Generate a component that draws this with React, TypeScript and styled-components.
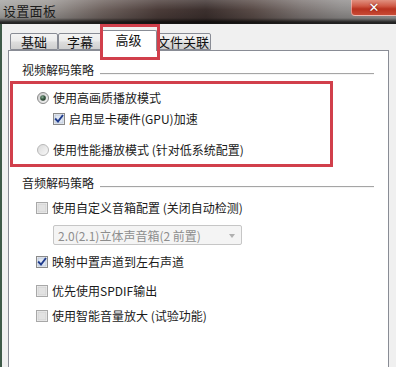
import React from "react";
import styled, { createGlobalStyle } from "styled-components";

const Global = createGlobalStyle`
  html, body { margin: 0; padding: 0; background: #f0f0f0; }
  body { font-family: "Noto Sans CJK SC", "Microsoft YaHei", "DejaVu Sans", sans-serif; }
  * { box-sizing: border-box; }
`;

const Window = styled.div`
  width: 396px;
  height: 367px;
  overflow: hidden;
  display: flex;
  flex-direction: column;
  background: #f0f0f0;
`;

const TitleBar = styled.div`
  height: 24px;
  flex: none;
  display: flex;
  justify-content: space-between;
  align-items: flex-start;
  background:
    linear-gradient(180deg, rgba(255,255,255,0.18) 0%, rgba(255,255,255,0) 40%, rgba(0,0,0,0.15) 75%, rgba(0,0,0,0.75) 92%, rgba(20,20,20,0.9) 100%),
    linear-gradient(90deg, #a4a4a2 0%, #9a9693 12%, #6e625e 26%, #4b3c39 40%, #3c302e 52%, #5a4c48 64%, #7c7472 76%, #8f8c8b 86%, #9a9a9a 100%);
`;

const Title = styled.span`
  font-size: 13px;
  line-height: 16px;
  color: #1b1b1b;
  margin: 3px 0 0 3px;
  letter-spacing: 0.3px;
`;

const CloseButton = styled.div`
  width: 45px;
  height: 16px;
  display: flex;
  align-items: center;
  justify-content: center;
  border-bottom-left-radius: 4px;
  border: 1px solid rgba(255, 220, 220, 0.55);
  border-top: none;
  border-right: none;
  background: linear-gradient(180deg, #e0907f 0%, #cf5a46 40%, #b8321f 60%, #c84a34 100%);
  color: #fff;
  font-family: "DejaVu Sans", sans-serif;
  font-size: 13px;
  font-weight: bold;
  line-height: 1;
  text-shadow: 0 0 2px rgba(80, 0, 0, 0.8);
`;

const Client = styled.div`
  flex: 1;
  display: flex;
  flex-direction: column;
  border-left: 2px solid #3e5a48;
  padding: 0 7px 0 6px;
`;

const TabStrip = styled.div`
  position: relative;
  height: 26px;
  flex: none;
  display: flex;
  align-items: flex-end;
  padding-left: 2px;
`;

const Tab = styled.div<{ $active?: boolean; $w: number }>`
  position: relative;
  z-index: ${(p) => (p.$active ? 2 : 0)};
  width: ${(p) => p.$w}px;
  height: ${(p) => (p.$active ? 21 : 17)}px;
  margin: ${(p) => (p.$active ? "0 -2px -1px -2px" : "0")};
  display: flex;
  align-items: ${(p) => (p.$active ? "flex-start" : "center")};
  justify-content: center;
  padding-top: ${(p) => (p.$active ? "1px" : "0")};
  font-size: 13px;
  line-height: 16px;
  color: #111;
  border: 1px solid #898c95;
  border-bottom: ${(p) => (p.$active ? "none" : "1px solid #898c95")};
  border-radius: 2px 2px 0 0;
  background: ${(p) =>
    p.$active
      ? "#ffffff"
      : "linear-gradient(180deg, #f4f4f4 0%, #ebebeb 45%, #dddddd 55%, #cfcfcf 100%)"};
`;

const TabMark = styled.div`
  position: absolute;
  left: 92px;
  top: 0;
  width: 60px;
  height: 36px;
  border: 3px solid #d13f4b;
  z-index: 3;
  pointer-events: none;
`;

const Panel = styled.div`
  flex: 1;
  background: #ffffff;
  border: 1px solid #898c95;
  border-bottom: none;
  display: flex;
  flex-direction: column;
`;

const GroupHeader = styled.div<{ $top: number }>`
  display: flex;
  align-items: center;
  height: 16px;
  margin-top: ${(p) => p.$top}px;
  padding: 0 14px 0 13px;
`;

const GroupLabel = styled.span`
  font-size: 12px;
  line-height: 16px;
  color: #1a1a1a;
  margin-right: 6px;
  white-space: nowrap;
`;

const GroupLine = styled.div`
  flex: 1;
  height: 1px;
  margin-top: 7px;
  background: #a5a5a5;
  box-shadow: 0 1px 0 #f4f4f4;
`;

const Highlight = styled.div`
  margin: 3px 0 0 1px;
  width: 323px;
  height: 86px;
  border: 3px solid #d13f4b;
  padding: 4px 0 0 24px;
  display: flex;
  flex-direction: column;
`;

const Options = styled.div`
  display: flex;
  flex-direction: column;
  padding-left: 27px;
`;

const Row = styled.div<{ $top?: number; $indent?: number }>`
  display: flex;
  align-items: center;
  height: 20px;
  margin-top: ${(p) => p.$top ?? 0}px;
  padding-left: ${(p) => p.$indent ?? 0}px;
  font-size: 12px;
  color: #1a1a1a;
  white-space: nowrap;
  gap: 4px;
`;

const Label = styled.span`
  line-height: 16px;
`;

const Select = styled.div`
  margin: 7px 0 0 17px;
  width: 189px;
  height: 20px;
  border: 1px solid #c6c6c6;
  border-radius: 2px;
  background: #f4f4f4;
  display: flex;
  align-items: center;
  justify-content: space-between;
  padding: 0 6px 0 4px;
  font-size: 12px;
  color: #8d8d8d;
  white-space: nowrap;
`;

const Arrow = styled.div`
  width: 0;
  height: 0;
  border-left: 3.5px solid transparent;
  border-right: 3.5px solid transparent;
  border-top: 4px solid #b0b0b0;
  margin-top: 2px;
`;

function Radio({ checked }: { checked?: boolean }) {
  return (
    <svg width="12" height="12" viewBox="0 0 12 12" style={{ flex: "none" }}>
      <defs>
        <linearGradient id={checked ? "rg1" : "rg0"} x1="0" y1="0" x2="1" y2="1">
          <stop offset="0" stopColor={checked ? "#c8c8c8" : "#d8d8d8"} />
          <stop offset="1" stopColor={checked ? "#f6f6f6" : "#fafafa"} />
        </linearGradient>
        <radialGradient id="rdot" cx="0.4" cy="0.35" r="0.7">
          <stop offset="0" stopColor="#8fb09a" />
          <stop offset="0.5" stopColor="#3c5e46" />
          <stop offset="1" stopColor="#1c3322" />
        </radialGradient>
      </defs>
      <circle cx="6" cy="6" r="5.5" fill={`url(#${checked ? "rg1" : "rg0"})`} stroke={checked ? "#8a8a8a" : "#b8b8b8"} strokeWidth="1" />
      {checked && <circle cx="6" cy="6" r="2.8" fill="url(#rdot)" />}
    </svg>
  );
}

function Check({ checked }: { checked?: boolean }) {
  return (
    <svg width="12" height="12" viewBox="0 0 12 12" style={{ flex: "none" }}>
      <rect x="0.5" y="0.5" width="11" height="11" fill="#f4f4f4" stroke={checked ? "#8a8a8a" : "#a8a8a8"} />
      <rect x="2" y="2" width="8" height="8" fill={checked ? "#dfe6f2" : "#e2e2e2"} stroke={checked ? "#b5c2d8" : "#cfcfcf"} strokeWidth="0.8" />
      {checked && (
        <path d="M2.8 6.2 L5 8.6 L9.4 2.8" fill="none" stroke="#1f3c8e" strokeWidth="1.9" strokeLinecap="square" />
      )}
    </svg>
  );
}

export default function App() {
  return (
    <>
      <Global />
      <Window>
        <TitleBar>
          <Title>设置面板</Title>
          <CloseButton>✕</CloseButton>
        </TitleBar>
        <Client>
          <TabStrip>
            <Tab $w={48}>基础</Tab>
            <Tab $w={44}>字幕</Tab>
            <Tab $w={57} $active>高级</Tab>
            <Tab $w={56}>文件关联</Tab>
            <TabMark />
          </TabStrip>
          <Panel>
            <GroupHeader $top={11}>
              <GroupLabel>视频解码策略</GroupLabel>
              <GroupLine />
            </GroupHeader>
            <Highlight>
              <Row>
                <Radio checked />
                <Label>使用高画质播放模式</Label>
              </Row>
              <Row $top={1} $indent={16}>
                <Check checked />
                <Label>启用显卡硬件(GPU)加速</Label>
              </Row>
              <Row $top={11}>
                <Radio />
                <Label>使用性能播放模式 (针对低系统配置)</Label>
              </Row>
            </Highlight>
            <GroupHeader $top={8}>
              <GroupLabel>音频解码策略</GroupLabel>
              <GroupLine />
            </GroupHeader>
            <Options>
              <Row $top={7}>
                <Check />
                <Label>使用自定义音箱配置 (关闭自动检测)</Label>
              </Row>
              <Select>
                <span>2.0(2.1)立体声音箱(2 前置)</span>
                <Arrow />
              </Select>
              <Row $top={7}>
                <Check checked />
                <Label>映射中置声道到左右声道</Label>
              </Row>
              <Row $top={9}>
                <Check />
                <Label>优先使用SPDIF输出</Label>
              </Row>
              <Row $top={5}>
                <Check />
                <Label>使用智能音量放大 (试验功能)</Label>
              </Row>
            </Options>
          </Panel>
        </Client>
      </Window>
    </>
  );
}
